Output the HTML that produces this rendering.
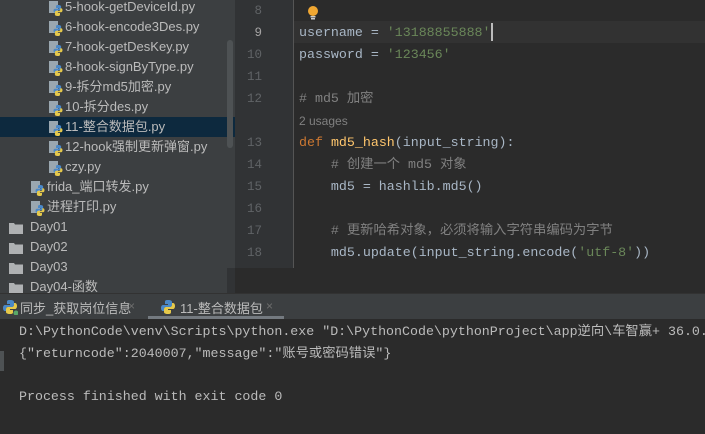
<!DOCTYPE html>
<html><head><meta charset="utf-8"><style>
*{margin:0;padding:0;box-sizing:border-box}
body{width:705px;height:434px;overflow:hidden;background:#2b2b2b;position:relative;font-family:"Liberation Sans","Noto Sans CJK SC",sans-serif}
#side{position:absolute;left:0;top:0;width:235px;height:293px;background:#3c3f41;overflow:hidden}
.row{position:absolute;left:0;width:235px;height:20px;color:#bbbbbb;font-size:13px;line-height:20px;white-space:nowrap}
.row svg{position:absolute;top:3px}
.row span{position:absolute}
#ed{position:absolute;left:235px;top:0;width:470px;height:268px;background:#2b2b2b;overflow:hidden}
.ln{position:absolute;left:0;width:27px;text-align:right;color:#606366;font:12.5px "Liberation Mono",monospace;line-height:22px}
.cl{position:absolute;left:64px;color:#a9b7c6;font:13.3px "Liberation Mono","Noto Sans CJK SC",monospace;line-height:22px;white-space:pre}
.s{color:#6a8759}.c{color:#808080}.k{color:#cc7832}.f{color:#ffc66d}
#tabs{position:absolute;left:0;top:293px;width:705px;height:26px;background:#3c3f41;border-top:1px solid #323232}
#con{position:absolute;left:0;top:319px;width:705px;height:115px;background:#2b2b2b}
.o{position:absolute;left:19px;color:#bbbbbb;font:13.3px "Liberation Mono","Noto Sans CJK SC",monospace;white-space:pre;line-height:22px}
</style></head><body>
<div id="side">
<div style="position:absolute;left:0;top:117px;width:235px;height:20px;background:#0d293e"></div>
<div style="position:absolute;left:227px;top:40px;width:6px;height:108px;background:#4e5254;border-radius:3px"></div>
<div style="position:absolute;left:227px;top:268px;width:8px;height:25px;background:#313335"></div>
</div>
<div id="ed">
<div style="position:absolute;left:0;top:0;width:59px;height:268px;background:#313335"></div>
<div style="position:absolute;left:58px;top:0;width:1px;height:268px;background:#555"></div>
<div style="position:absolute;left:59px;top:21px;width:411px;height:22px;background:#323232"></div>
<svg style="position:absolute;left:72px;top:5px" width="12" height="16"><circle cx="6" cy="6" r="5" fill="#f0a732"/><rect x="3.5" y="11" width="5" height="1.5" fill="#ccc"/><rect x="4" y="13" width="4" height="1.5" fill="#ccc"/></svg>
<div style="position:absolute;left:256px;top:23px;width:2px;height:18px;background:#bbb"></div>
</div>
<div id="tabs">
<svg style="position:absolute;left:2px;top:5px" width="16" height="16"><path d="M8 1c-3 0-3 1-3 2v2h3v1H3c-1 0-2 1-2 3s1 3 2 3h1v-2c0-1 1-2 2-2h4c1 0 2-1 2-2V3c0-1-1-2-4-2z" fill="#4a88c7"/><path d="M8 15c3 0 3-1 3-2v-2H8v-1h5c1 0 2-1 2-3s-1-3-2-3h-1v2c0 1-1 2-2 2H6c-1 0-2 1-2 2v3c0 1 1 2 4 2z" fill="#e6c94a"/><circle cx="14" cy="14" r="2.5" fill="#59a869"/></svg>
<span style="position:absolute;left:20px;top:4px;color:#bbb;font-size:13px">同步_获取岗位信息</span>
<span style="position:absolute;left:128px;top:5px;color:#6e6e6e;font-size:12px">×</span>
<svg style="position:absolute;left:160px;top:5px" width="16" height="16"><path d="M8 1c-3 0-3 1-3 2v2h3v1H3c-1 0-2 1-2 3s1 3 2 3h1v-2c0-1 1-2 2-2h4c1 0 2-1 2-2V3c0-1-1-2-4-2z" fill="#4a88c7"/><path d="M8 15c3 0 3-1 3-2v-2H8v-1h5c1 0 2-1 2-3s-1-3-2-3h-1v2c0 1-1 2-2 2H6c-1 0-2 1-2 2v3c0 1 1 2 4 2z" fill="#e6c94a"/></svg>
<span style="position:absolute;left:180px;top:4px;color:#bbb;font-size:13px">11-整合数据包</span>
<span style="position:absolute;left:266px;top:5px;color:#6e6e6e;font-size:12px">×</span>
<div style="position:absolute;left:148px;top:22px;width:136px;height:3px;background:#747a80"></div>
</div>
<div id="con">
<div style="position:absolute;left:0;top:32px;width:4px;height:20px;background:#4e5254"></div>
<div class="o" style="top:2px">D:\PythonCode\venv\Scripts\python.exe "D:\PythonCode\pythonProject\app逆向\车智赢+ 36.0.</div>
<div class="o" style="top:24px">{"returncode":2040007,"message":"账号或密码错误"}</div>
<div class="o" style="top:67px">Process finished with exit code 0</div>
</div>
<script>
var side=document.getElementById('side');
var py='<svg width="16" height="16"><rect x="1" y="1" width="9" height="12" fill="#9aa7b0"/><path d="M10 5c-2 0-2 1-2 1.5V8h2.5v.7H7c-.8 0-1.5.7-1.5 2s.7 2 1.5 2h.7V11.5c0-.7.6-1.3 1.3-1.3h2.8c.7 0 1.3-.6 1.3-1.3V6.5C13 5.7 12.3 5 10 5z" fill="#4a88c7"/><path d="M10 16c2 0 2-1 2-1.5V13H9.5v-.7H13c.8 0 1.5-.7 1.5-2s-.7-2-1.5-2h-.7v1.3c0 .7-.6 1.3-1.3 1.3H8.2c-.7 0-1.3.6-1.3 1.3v2.3c0 .8.7 1.5 3.1 1.5z" fill="#e6c94a"/></svg>';
var fold='<svg width="16" height="16"><path d="M1 3h5l1 1.5h8V14H1z" fill="#afb1b3"/></svg>';
var rows=[[50,'5-hook-getDeviceId.py',py],[50,'6-hook-encode3Des.py',py],[50,'7-hook-getDesKey.py',py],[50,'8-hook-signByType.py',py],[50,'9-拆分md5加密.py',py],[50,'10-拆分des.py',py],[50,'11-整合数据包.py',py],[50,'12-hook强制更新弹窗.py',py],[50,'czy.py',py],[32,'frida_端口转发.py',py],[32,'进程打印.py',py],[10,'Day01',fold],[10,'Day02',fold],[10,'Day03',fold],[10,'Day04-函数',fold]];
rows.forEach(function(r,i){var d=document.createElement('div');d.className='row';d.style.top=(-3+i*20)+'px';var off=r[2]==fold?20:15;d.innerHTML=r[2].replace('<svg','<svg style="left:'+(r[0]-2)+'px"')+'<span style="left:'+(r[0]+off)+'px">'+r[1]+'</span>';side.appendChild(d);});
var ed=document.getElementById('ed');
var L=[[8,''],[9,"username = <span class=s>'13188855888'</span>"],[10,"password = <span class=s>'123456'</span>"],[11,''],[12,'<span class=c># md5 加密</span>'],[0,'<span style="color:#808080;font-family:Liberation Sans,sans-serif;font-size:12px">2 usages</span>'],[13,'<span class=k>def</span> <span class=f>md5_hash</span>(input_string):'],[14,'    <span class=c># 创建一个 md5 对象</span>'],[15,'    md5 = hashlib.md5()'],[16,''],[17,'    <span class=c># 更新哈希对象，必须将输入字符串编码为字节</span>'],[18,"    md5.update(input_string.encode(<span class=s>'utf-8'</span>))"]];
L.forEach(function(l,i){var t=i*22;if(l[0]){var n=document.createElement('div');n.className='ln';n.style.top=t+'px';n.textContent=l[0];if(l[0]==9)n.style.color='#a4a3a3';ed.appendChild(n);}var c=document.createElement('div');c.className='cl';c.style.top=t+'px';c.innerHTML=l[1];ed.appendChild(c);});
</script>
</body></html>
